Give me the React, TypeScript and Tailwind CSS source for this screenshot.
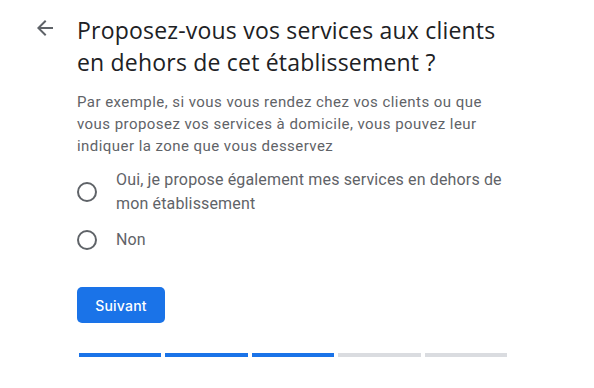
import React from "react";

function Radio() {
  return (
    <span className="flex h-5 w-5 shrink-0 items-center justify-center rounded-full border-2 border-[#5f6368]" />
  );
}

export default function App() {
  const segs = [true, true, true, false, false];
  return (
    <div className="h-[388px] w-[594px] bg-white font-['Roboto',sans-serif]">
      <div className="flex pl-[33px] pt-[16px]">
        <button className="h-6 w-6 shrink-0 text-[#5f6368]" aria-label="Retour">
          <svg viewBox="0 0 24 24" width="24" height="24" fill="currentColor">
            <path d="M20 11H7.83l5.59-5.59L12 4l-8 8 8 8 1.41-1.41L7.83 13H20v-2z" />
          </svg>
        </button>
        <div className="ml-5 w-[432px]">
          <h1 className="-mt-[2px] text-[23px] leading-8 tracking-[0.2px] text-[#202124] font-['Open_Sans',sans-serif]">
            Proposez-vous vos services aux clients en dehors de cet établissement ?
          </h1>
          <p className="mt-[13px] text-[15px] leading-[22px] tracking-[0.45px] text-[#5f6368]">
            Par exemple, si vous vous rendez chez vos clients ou que vous proposez vos services à domicile, vous pouvez leur indiquer la zone que vous desservez
          </p>
          <div className="mt-[11px] flex flex-col gap-[12px]">
            <label className="flex items-center gap-[19px]">
              <Radio />
              <span className="text-[16px] leading-6 tracking-[0.15px] text-[#5f6368]">
                Oui, je propose également mes services en dehors de mon établissement
              </span>
            </label>
            <label className="flex items-center gap-[19px]">
              <Radio />
              <span className="text-[16px] leading-6 tracking-[0.15px] text-[#5f6368]">Non</span>
            </label>
          </div>
          <button className="mt-[35px] h-9 w-[88px] rounded-[5px] bg-[#1a73e8] text-[14px] font-medium tracking-[0.2px] text-white font-['Inter',sans-serif]">
            Suivant
          </button>
          <div className="mt-[30px] ml-[2px] flex w-[428px] gap-1">
            {segs.map((on, i) => (
              <div key={i} className={on ? "h-1 flex-1 bg-[#1a73e8]" : "h-1 flex-1 bg-[#dadce0]"} />
            ))}
          </div>
        </div>
      </div>
    </div>
  );
}
